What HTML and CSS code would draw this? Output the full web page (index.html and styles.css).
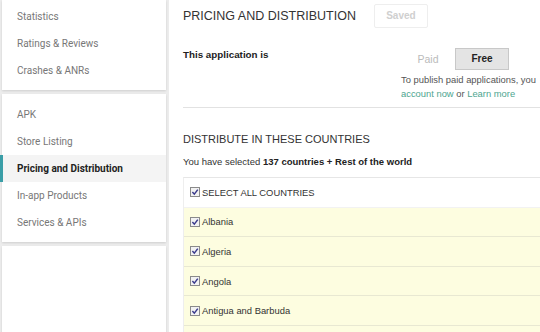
FILE: index.html
```html
<!DOCTYPE html>
<html>
<head>
<meta charset="utf-8">
<link rel="stylesheet" href="styles.css">
</head>
<body>
<div class="page">
  <aside class="sidebar">
    <div class="card card-top">
      <div class="nav-item">Statistics</div>
      <div class="nav-item">Ratings &amp; Reviews</div>
      <div class="nav-item">Crashes &amp; ANRs</div>
    </div>
    <div class="card card-mid">
      <div class="nav-item">APK</div>
      <div class="nav-item">Store Listing</div>
      <div class="nav-item active">Pricing and Distribution</div>
      <div class="nav-item">In-app Products</div>
      <div class="nav-item">Services &amp; APIs</div>
    </div>
    <div class="card card-bottom"></div>
  </aside>
  <main class="main">
    <header class="header">
      <h1 class="title">PRICING AND DISTRIBUTION</h1>
      <button class="saved">Saved</button>
    </header>
    <section class="pricing">
      <div class="pricing-label">This application is</div>
      <div class="pricing-control">
        <div class="toggle">
          <span class="toggle-btn">Paid</span>
          <span class="toggle-btn on">Free</span>
        </div>
        <p class="note">To publish paid applications, you<br><a class="link">account now</a> or <a class="link">Learn more</a></p>
      </div>
    </section>
    <hr class="divider">
    <section class="countries">
      <h2 class="subtitle">DISTRIBUTE IN THESE COUNTRIES</h2>
      <p class="summary">You have selected <b>137 countries + Rest of the world</b></p>
      <div class="table">
        <div class="row all"><span class="cb"><svg viewBox="0 0 10 10" width="10" height="10"><rect x="0.5" y="0.5" width="9" height="9" fill="#f2f2f2" stroke="#8a8a8a"/><path d="M2.4 5.1 L4.3 7.2 L7.8 2.6" fill="none" stroke="#3b3b8c" stroke-width="1.5"/></svg></span>SELECT ALL COUNTRIES</div>
        <div class="row"><span class="cb"><svg viewBox="0 0 10 10" width="10" height="10"><rect x="0.5" y="0.5" width="9" height="9" fill="#f2f2f2" stroke="#8a8a8a"/><path d="M2.4 5.1 L4.3 7.2 L7.8 2.6" fill="none" stroke="#3b3b8c" stroke-width="1.5"/></svg></span>Albania</div>
        <div class="row"><span class="cb"><svg viewBox="0 0 10 10" width="10" height="10"><rect x="0.5" y="0.5" width="9" height="9" fill="#f2f2f2" stroke="#8a8a8a"/><path d="M2.4 5.1 L4.3 7.2 L7.8 2.6" fill="none" stroke="#3b3b8c" stroke-width="1.5"/></svg></span>Algeria</div>
        <div class="row"><span class="cb"><svg viewBox="0 0 10 10" width="10" height="10"><rect x="0.5" y="0.5" width="9" height="9" fill="#f2f2f2" stroke="#8a8a8a"/><path d="M2.4 5.1 L4.3 7.2 L7.8 2.6" fill="none" stroke="#3b3b8c" stroke-width="1.5"/></svg></span>Angola</div>
        <div class="row"><span class="cb"><svg viewBox="0 0 10 10" width="10" height="10"><rect x="0.5" y="0.5" width="9" height="9" fill="#f2f2f2" stroke="#8a8a8a"/><path d="M2.4 5.1 L4.3 7.2 L7.8 2.6" fill="none" stroke="#3b3b8c" stroke-width="1.5"/></svg></span>Antigua and Barbuda</div>
        <div class="row"></div>
      </div>
    </section>
  </main>
</div>
</body>
</html>
```

FILE: styles.css
```css
* { box-sizing: border-box; }
html, body { margin: 0; padding: 0; }
body {
  width: 540px;
  height: 332px;
  overflow: hidden;
  background: #ececec;
  font-family: "Liberation Sans", Arial, sans-serif;
  color: #333;
}
.page {
  display: flex;
  height: 332px;
}
.sidebar {
  width: 168px;
  flex: none;
  padding: 0 2px 0 2px;
  display: flex;
  flex-direction: column;
  gap: 4px;
}
.card {
  background: #fff;
  box-shadow: 0 1px 2px rgba(0,0,0,0.12);
}
.card-top { padding: 3px 0 6px; height: 90px; }
.card-mid { padding: 7px 0 6px; }
.card-bottom { flex: 1; margin-bottom: -4px; }
.nav-item {
  height: 27px;
  line-height: 27px;
  padding-left: 15px;
  font-family: Roboto, "Liberation Sans", sans-serif;
  font-size: 10px;
  color: #777;
  white-space: nowrap;
}
.nav-item.active {
  background: #f4f4f4;
  color: #222;
  font-weight: 700;
  border-left: 3px solid #3a9ea7;
  margin-left: -2px;
  padding-left: 14px;
}
.main {
  flex: 1;
  background: #fff;
  margin-left: 1px;
  padding-left: 14px;
  overflow: hidden;
  min-width: 0;
}
.header {
  height: 31px;
  display: flex;
  align-items: center;
}
.title {
  margin: 0;
  font-size: 12.5px;
  font-weight: 400;
  color: #333;
  white-space: nowrap;
}
.saved {
  margin-left: 18px;
  width: 54px;
  height: 24px;
  background: #fff;
  border: 1px solid #eee;
  border-radius: 2px;
  font-family: "Liberation Sans", Arial, sans-serif;
  font-size: 10px;
  font-weight: 700;
  color: #cfcfcf;
  padding: 0;
}
.pricing {
  margin-top: 17px;
  display: grid;
  grid-template-columns: 218px 1fr;
}
.pricing-label {
  font-size: 9.8px;
  font-weight: 700;
  color: #222;
  line-height: 13px;
}
.toggle {
  display: flex;
  height: 22px;
}
.toggle-btn {
  width: 54px;
  height: 22px;
  line-height: 20px;
  text-align: center;
  font-size: 10.5px;
  color: #bbb;
  border: 1px solid transparent;
}
.toggle-btn.on {
  background: #e4e4e4;
  border-color: #c8c8c8;
  color: #222;
  font-weight: 700;
  font-size: 10px;
}
.note {
  margin: 3px 0 0;
  font-size: 9.4px;
  line-height: 14px;
  color: #555;
  white-space: nowrap;
}
.link { color: #4ea58f; text-decoration: none; }
.divider {
  margin: 6px 0 0;
  border: 0;
  border-top: 1px solid #e2e2e2;
}
.subtitle {
  margin: 23px 0 0;
  font-size: 11px;
  font-weight: 400;
  color: #333;
  line-height: 16px;
  white-space: nowrap;
}
.summary {
  margin: 8px 0 0;
  font-size: 9.5px;
  color: #333;
  line-height: 14px;
  white-space: nowrap;
}
.summary b { font-weight: 700; color: #222; }
.table {
  margin-top: 8px;
  border-top: 1px solid #e6e6e6;
  border-left: 1px solid #eee;
}
.row {
  height: 29.6px;
  display: flex;
  align-items: center;
  padding-left: 6px;
  background: #fdfde0;
  border-bottom: 1px solid #e8e8d2;
  font-size: 9.4px;
  color: #333;
  white-space: nowrap;
}
.row.all {
  background: #fff;
  border-bottom: 1px solid #f2f2f2;
}
.cb {
  display: inline-flex;
  width: 10px;
  height: 10px;
  margin-right: 2px;
}
```
